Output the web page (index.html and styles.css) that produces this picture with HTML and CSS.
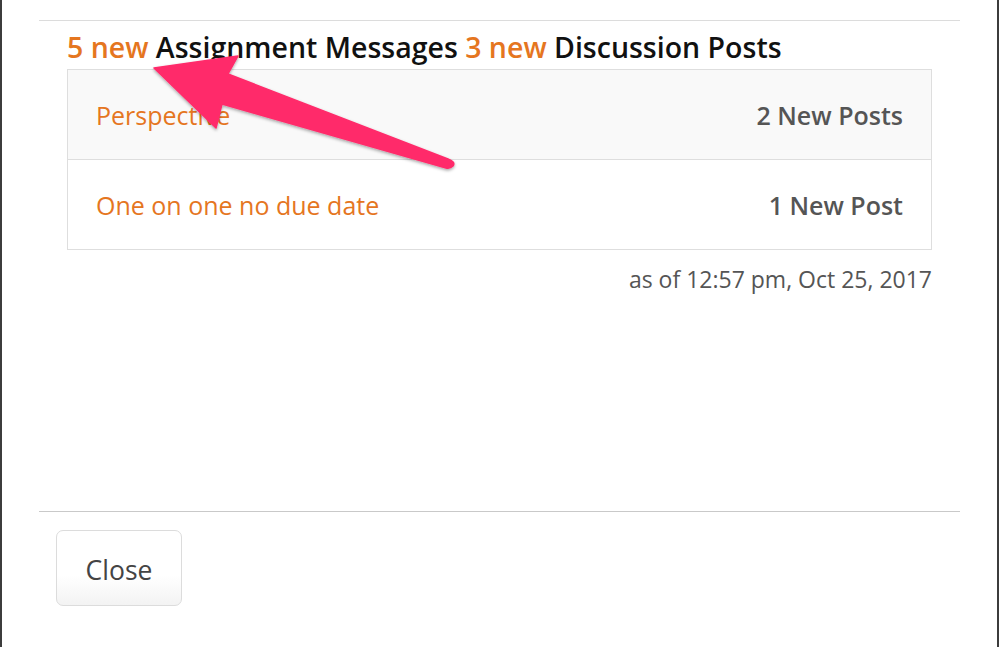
FILE: index.html
```html
<!DOCTYPE html>
<html>
<head>
<meta charset="utf-8">
<link rel="stylesheet" href="styles.css">
</head>
<body>
<div class="modal">
  <div class="top-rule"></div>
  <div class="modal-body">
    <h2 class="summary"><span class="new">5 new</span> Assignment Messages <span class="new">3 new</span> Discussion Posts</h2>
    <div class="posts">
      <div class="row shaded">
        <span class="title">Perspective</span>
        <span class="count">2 New Posts</span>
      </div>
      <div class="row">
        <span class="title">One on one no due date</span>
        <span class="count">1 New Post</span>
      </div>
    </div>
    <p class="stamp">as of 12:57 pm, Oct 25, 2017</p>
  </div>
  <div class="modal-footer">
    <button class="btn">Close</button>
  </div>
  <svg class="arrow" width="999" height="647" viewBox="0 0 999 647">
    <defs>
      <filter id="sh" x="-10%" y="-10%" width="120%" height="130%">
        <feDropShadow dx="0" dy="1.5" stdDeviation="1.5" flood-color="#000" flood-opacity="0.35"/>
      </filter>
    </defs>
    <path d="M154 68 L238 56 L228 74 L448 159 Q456 162 453 166 Q450 169 446 168 L222 104 L216 128 Z" fill="#ff2b6b" stroke="#ff2b6b" stroke-width="1.5" stroke-linejoin="round" filter="url(#sh)"/>
  </svg>
</div>
</body>
</html>
```
FILE: styles.css
```css
html, body {
  margin: 0;
  padding: 0;
}
body {
  background: #3c3c3c;
  font-family: "Open Sans", "DejaVu Sans", sans-serif;
}
.modal {
  position: relative;
  margin: 0 2px;
  height: 647px;
  background: #fff;
  display: flex;
  flex-direction: column;
}
.top-rule {
  height: 20px;
  margin: 0 37px;
  border-bottom: 1px solid #dcdcdc;
}
.modal-body {
  flex: 1;
  padding: 0 65px;
}
.summary {
  margin: 7px 0 3px;
  font-size: 28.5px;
  line-height: 38px;
  font-weight: 600;
  color: #111;
}
.new {
  color: #e5761f;
}
.posts {
  border: 1px solid #dedede;
}
.row {
  height: 89px;
  display: flex;
  align-items: center;
  justify-content: space-between;
  padding: 0 28px 0 28px;
  font-size: 25px;
}
.row + .row {
  border-top: 1px solid #dedede;
}
.shaded {
  background: #f9f9f9;
}
.title {
  color: #e5761f;
}
.count {
  color: #555;
  font-weight: 600;
}
.stamp {
  margin: 14px 0 0;
  text-align: right;
  font-size: 23px;
  line-height: 30px;
  color: #555;
}
.modal-footer {
  height: 136px;
  margin: 0 37px;
  border-top: 1px solid #c9c9c9;
  padding: 18px 17px 0;
  box-sizing: border-box;
}
.btn {
  width: 126px;
  height: 76px;
  border: 1px solid #dcdcdc;
  border-radius: 7px;
  background: linear-gradient(#ffffff 60%, #f3f3f3);
  font-family: "Open Sans", "DejaVu Sans", sans-serif;
  font-size: 26.5px;
  color: #444;
  padding: 4px 0 0;
}
.arrow {
  position: absolute;
  left: -2px;
  top: 0;
  pointer-events: none;
}
```
